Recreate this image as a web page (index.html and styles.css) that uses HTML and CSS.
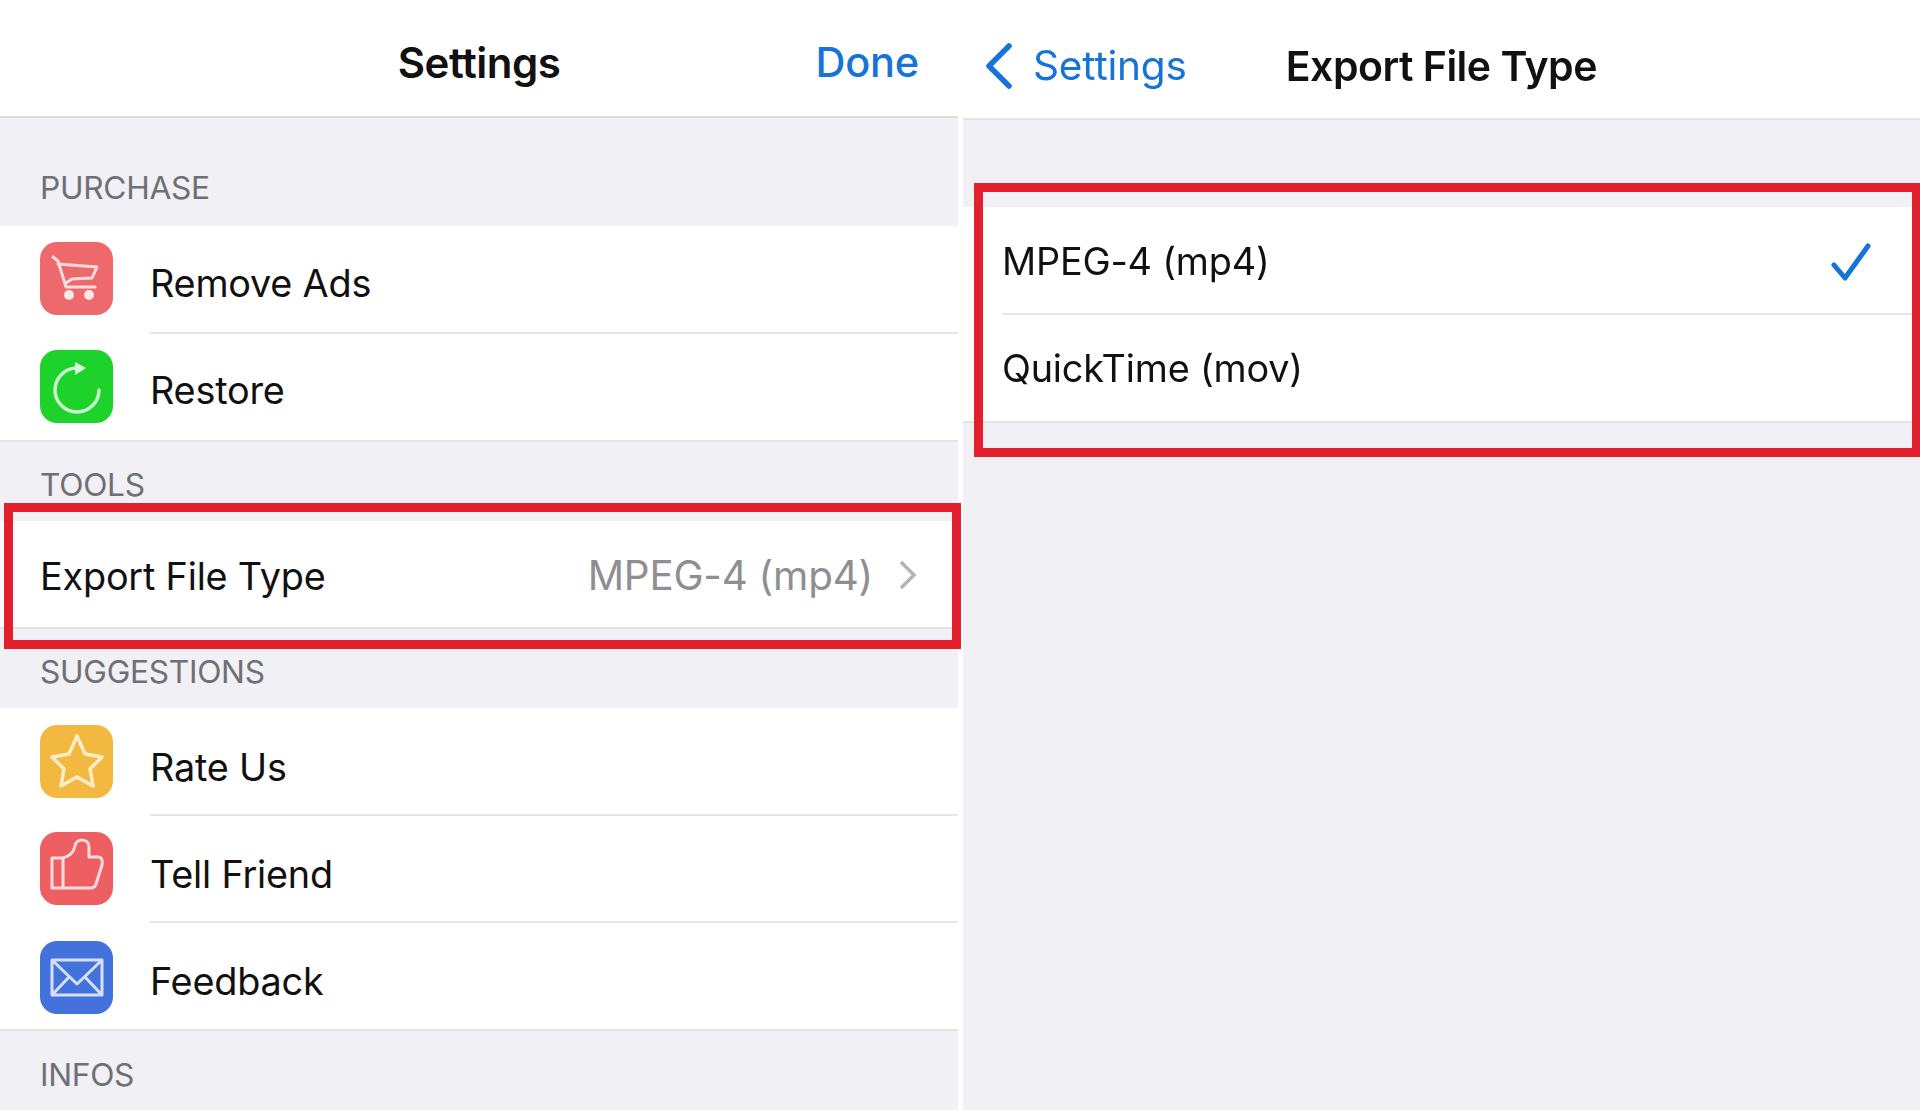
FILE: index.html
```html
<!DOCTYPE html>
<html lang="en">
<head>
<meta charset="utf-8">
<title>Settings</title>
<link rel="stylesheet" href="styles.css">
</head>
<body>
<main class="screens">
  <section class="panel panel-left">
    <header class="nav nav-left">
      <h1 class="nav-title">Settings</h1>
      <a class="nav-done">Done</a>
    </header>
    <h2 class="label label-purchase">PURCHASE</h2>
    <ul class="group">
      <li class="row">
        <span class="icon icon-cart">
          <svg viewBox="0 0 73 73"><path class="line" d="M13 15l5 4 8 26h29M18 22l39 3-5 11-20 1-6 4"/><circle class="dot" cx="29" cy="53" r="5"/><circle class="dot" cx="49" cy="53" r="5"/></svg>
        </span>
        <span class="row-text">Remove Ads</span>
      </li>
      <li class="row">
        <span class="icon icon-restore">
          <svg viewBox="0 0 73 73"><path class="line" d="M37 18A22 22 0 1 0 59 40"/><path class="dot" d="M35 12l11 6-11 7z"/></svg>
        </span>
        <span class="row-text">Restore</span>
      </li>
    </ul>
    <h2 class="label label-tools">TOOLS</h2>
    <div class="group framed framed-left">
      <div class="row row-plain">
        <span class="row-text">Export File Type</span>
        <span class="row-value">MPEG-4 (mp4)</span>
        <svg class="chevron" viewBox="0 0 20 32"><path d="M3 3l13 13L3 29"/></svg>
      </div>
    </div>
    <h2 class="label label-suggestions">SUGGESTIONS</h2>
    <ul class="group group-suggestions">
      <li class="row">
        <span class="icon icon-star">
          <svg viewBox="0 0 73 73"><path class="line" d="M37 11l8 18 17 3-12 12 3 17-16-9-16 9 3-17-12-12 17-3z"/></svg>
        </span>
        <span class="row-text">Rate Us</span>
      </li>
      <li class="row">
        <span class="icon icon-thumb">
          <svg viewBox="0 0 73 73"><path class="line" d="M12 26h11v30H12zM23 26c7-2 11-7 12-12 1-8 14-8 14 1v10h9c4 0 5 4 4 8l-6 19c-1 3-2 4-5 4H23"/></svg>
        </span>
        <span class="row-text">Tell Friend</span>
      </li>
      <li class="row">
        <span class="icon icon-mail">
          <svg viewBox="0 0 73 73"><path class="line" d="M12 19h50v35H12zM12 19l25 24 25-24M12 54l17-18M62 54L45 36"/></svg>
        </span>
        <span class="row-text">Feedback</span>
      </li>
    </ul>
    <h2 class="label label-infos">INFOS</h2>
  </section>

  <section class="panel panel-right">
    <header class="nav nav-right">
      <a class="nav-back">
        <svg class="back-chevron" viewBox="0 0 30 48"><path d="M25 4L5 24l20 20"/></svg>
        <span>Settings</span>
      </a>
      <h1 class="nav-title nav-title-right">Export File Type</h1>
    </header>
    <div class="group framed framed-right">
      <div class="row row-plain row-indent">
        <span class="row-text">MPEG-4 (mp4)</span>
        <svg class="check" viewBox="0 0 40 38"><path d="M3 22l11 13L37 3"/></svg>
      </div>
      <div class="row row-plain row-indent">
        <span class="row-text">QuickTime (mov)</span>
      </div>
    </div>
  </section>
</main>
</body>
</html>
```
FILE: styles.css
```css
* { box-sizing: border-box; }
html, body { margin: 0; padding: 0; background: #fff; }
body {
  width: 1920px;
  height: 1110px;
  overflow: hidden;
  font-family: Inter, "Liberation Sans", sans-serif;
  color: #111;
}
h1, h2, ul { margin: 0; padding: 0; list-style: none; font-weight: 400; }

.screens { display: flex; gap: 5px; height: 1110px; filter: blur(0.55px); }
.panel { width: 958px; height: 1110px; background: #f0f0f5; flex: none; }
.panel-right { width: 957px; }

.nav { background: #fff; display: flex; align-items: center; position: relative; }
.nav-left { height: 118px; border-bottom: 2px solid #dcdcdf; justify-content: center; padding-top: 8px; }
.nav-right { height: 120px; border-bottom: 2px solid #e2e2e5; padding: 13px 0 0 21px; }
.nav-title { font-size: 42px; font-weight: 600; letter-spacing: -0.5px; color: #111; }
.nav-title-right { margin-left: 99px; font-size: 41px; }
.nav-done { position: absolute; right: 39px; top: 39px; font-size: 41.5px; font-weight: 500; letter-spacing: -0.2px; color: #1673d8; line-height: 46px; }
.nav-back { display: flex; align-items: center; gap: 19px; font-size: 40.6px; color: #1673d8; letter-spacing: -0.2px; }
.back-chevron { width: 30px; height: 48px; fill: none; stroke: #1673d8; stroke-width: 5.5; stroke-linecap: round; stroke-linejoin: round; }

.label { padding-left: 40px; font-size: 31.7px; line-height: 38px; color: #6f6f76; letter-spacing: -0.3px; display: flex; align-items: flex-end; }
.label-purchase { height: 108px; padding-bottom: 19px; }
.label-tools { height: 79px; padding-bottom: 17px; }
.label-suggestions { height: 79px; padding-bottom: 17px; }
.label-infos { height: 78px; padding-bottom: 15px; }

.group { background: #fff; border-bottom: 2px solid #e3e3e6; position: relative; }
.row { height: 107px; display: flex; align-items: center; padding-left: 40px; position: relative; }
.row + .row::before {
  content: "";
  position: absolute;
  left: 150px;
  right: 0;
  top: -1px;
  height: 2px;
  background: #e6e6e8;
}
.row-plain { height: 106px; padding-right: 40px; padding-top: 3px; }
.row-text { font-size: 37.8px; letter-spacing: -0.2px; color: #111; }
.icon + .row-text { margin-left: 37px; padding-top: 6px; }
.group-suggestions .icon + .row-text { padding-top: 10px; }
.row-value { margin-left: auto; font-size: 40.3px; color: #8e8e93; letter-spacing: -0.2px; }
.chevron { width: 20px; height: 32px; margin-left: 25px; margin-bottom: 2px; fill: none; stroke: #b4b4b8; stroke-width: 3.5; }

.icon { width: 73px; height: 73px; border-radius: 17px; flex: none; display: block; }
.icon svg { width: 73px; height: 73px; display: block; }
.line { fill: none; stroke-width: 3; stroke-linejoin: round; stroke-linecap: round; }
.dot { stroke: none; }
.icon-cart { background: #ee696b; margin-top: -3px; }
.icon-cart .line { stroke: #fbdcdc; }
.icon-cart .dot { fill: #fbe7e7; }
.icon-restore { background: #1dd32b; }
.icon-restore .line { stroke: #c9f5cc; stroke-width: 3.5; }
.icon-restore .dot { fill: #d9f8db; }
.icon-star { background: #f3b83f; }
.icon-star .line { stroke: #fdeec8; stroke-width: 3.5; }
.icon-thumb { background: #ee5f64; }
.icon-thumb .line { stroke: #fbdcdc; }
.icon-mail { background: #4472dd; margin-top: 4px; }
.icon-mail .line { stroke: #d6e0f8; stroke-linecap: butt; }

.framed::after {
  content: "";
  position: absolute;
  border: 9px solid #e21f2d;
  pointer-events: none;
}
.framed-left::after { left: 4px; right: -3px; top: -18px; bottom: -22px; }
.framed-right { margin-top: 87px; }
.framed-right::after { left: 11px; right: -1px; top: -24px; bottom: -36px; }
.row-indent { height: 107px; padding: 0 49px 0 39px; justify-content: space-between; }
.row-indent + .row-indent::before { left: 39px; }
.check { width: 40px; height: 38px; margin-top: 2px; fill: none; stroke: #1673d8; stroke-width: 5; stroke-linecap: round; stroke-linejoin: round; }
```
